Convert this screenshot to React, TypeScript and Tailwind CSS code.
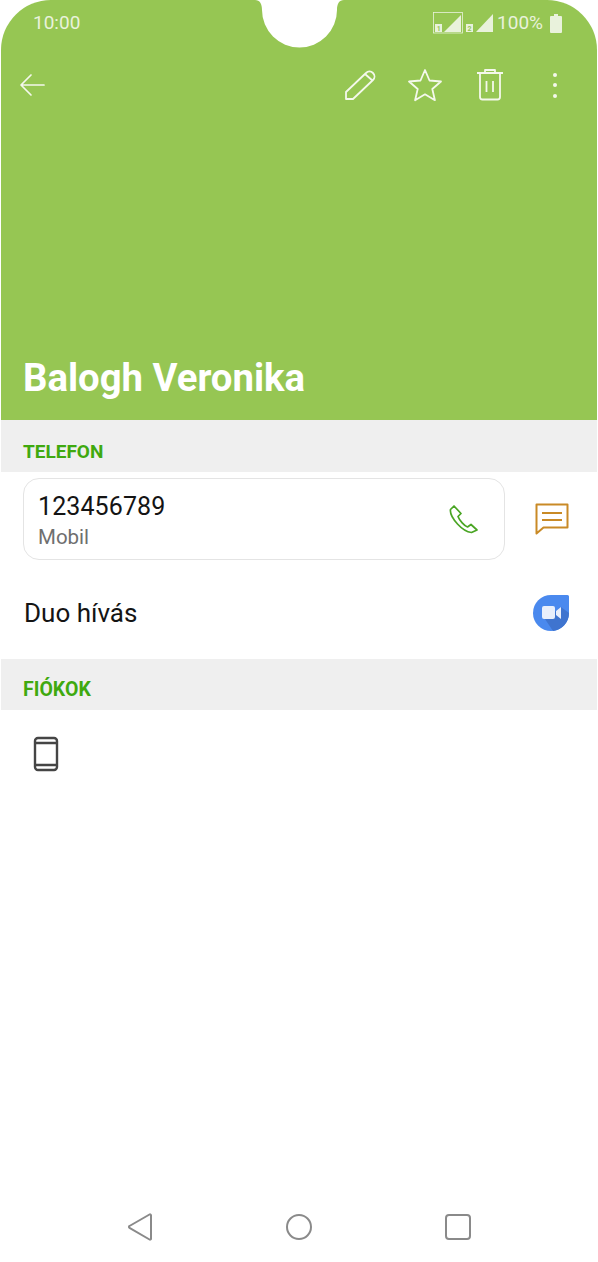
function Notch() {
  return (
    <svg className="absolute left-[249px] top-0" width="98" height="48" viewBox="0 0 98 48">
      <path d="M5 0c5 0 7 4 7 10a37.500 37.500 0 0 0 75 0c0-6 2-10 7-10z" fill="#fff" />
    </svg>
  );
}

function SignalIcons() {
  return (
    <svg width="62" height="24" viewBox="0 0 62 24" fill="#e9f2dc">
      <rect x="0.500" y="1.500" width="29" height="20.500" fill="none" stroke="#e9f2dc" strokeWidth="0.800" />
      <rect x="2" y="13" width="7" height="8" />
      <text x="3.800" y="20" fontSize="7" fill="#96c653" fontWeight="700">1</text>
      <path d="M11 21 28 4v17z" />
      <rect x="33" y="13" width="7" height="8" />
      <text x="34.500" y="20" fontSize="7" fill="#96c653" fontWeight="700">2</text>
      <path d="M43 21 60 3v18z" />
    </svg>
  );
}

function Battery() {
  return (
    <svg width="12" height="19" viewBox="0 0 12 19">
      <path d="M4 0h4v2h3a1 1 0 0 1 1 1v15a1 1 0 0 1-1 1H1a1 1 0 0 1-1-1V3a1 1 0 0 1 1-1h3z" fill="#e9f2dc" />
    </svg>
  );
}

export default function App() {
  return (
    <div className="relative w-[598px] h-[1262px] bg-white overflow-hidden font-['Roboto',sans-serif]">
      {/* Header */}
      <header className="relative mx-px h-[420px] bg-[#96c653] rounded-t-[50px] flex flex-col">
        <Notch />
        <div className="h-[46px] flex items-center pl-[32px] pr-[35px] text-[#e9f2dc] text-[19px]">
          <span>10:00</span>
          <div className="ml-auto flex items-center">
            <SignalIcons />
            <span className="ml-[2px] mr-[7px]">100%</span>
            <Battery />
          </div>
        </div>
        <div className="h-[80px] flex items-center pl-[18px] pr-[40px] -mt-[1px]">
          <svg width="28" height="24" viewBox="0 0 28 24" fill="none" stroke="#f4f8ec" strokeWidth="1.700" strokeLinecap="round" strokeLinejoin="round">
            <path d="M25 12H3M12 2 2 12l10 10" />
          </svg>
          <div className="ml-auto flex items-center">
            <svg width="34" height="34" viewBox="0 0 34 34" fill="none" stroke="#f4f8ec" strokeWidth="1.800" strokeLinejoin="round" className="mr-[31px]">
              <path d="M3 31v-7L23 5c2-2 5-2 7 0s2 5 0 7L10 31zM22 6l8 7" />
            </svg>
            <svg width="34" height="34" viewBox="0 0 34 34" fill="none" stroke="#f4f8ec" strokeWidth="1.800" strokeLinejoin="round" className="mr-[34px]">
              <path d="M17 2l4.500 10.500 11.500 1-8.700 7.500 2.600 11.200L17 26.300 7.100 32.200 9.700 21 1 13.500l11.500-1z" />
            </svg>
            <svg width="28" height="32" viewBox="0 0 28 32" fill="none" stroke="#f4f8ec" strokeWidth="1.800" strokeLinejoin="round" className="mr-[49px]">
              <path d="M1 4h26M9 4V1h10v3M4 4v24a2.500 2.500 0 0 0 2.500 2.500h15a2.500 2.500 0 0 0 2.500-2.500V4M10.500 12v11M17 12v11" />
            </svg>
            <div className="flex flex-col gap-[6.500px]">
              <span className="w-[4px] h-[4px] rounded-full bg-[#f4f8ec]" />
              <span className="w-[4px] h-[4px] rounded-full bg-[#f4f8ec]" />
              <span className="w-[4px] h-[4px] rounded-full bg-[#f4f8ec]" />
            </div>
          </div>
        </div>
        <h1 className="mt-auto pl-[22px] pb-[20px] text-[38.300px] leading-[44px] font-bold text-white">Balogh Veronika</h1>
      </header>

      {/* Telefon */}
      <div className="mx-px h-[52px] bg-[#efefef] flex items-end pb-[8px] pl-[22px] text-[19px] leading-[24px] font-bold text-[#3fa90f]">TELEFON</div>
      <div className="mt-[6px] ml-[23px] flex items-center">
        <div className="w-[482px] h-[82px] rounded-[16px] border border-[#e4e4e4] flex items-center pl-[14px] pr-[24px]">
          <div className="pt-[3px]">
            <div className="text-[25px] leading-[32px] text-[#141414] tracking-[0.100px]">123456789</div>
            <div className="text-[20.500px] leading-[26px] text-[#6f6f6f]  mt-[1px]">Mobil</div>
          </div>
          <svg className="ml-auto" width="32" height="32" viewBox="0 0 32 32" fill="none" stroke="#4aa524" strokeWidth="1.700" strokeLinejoin="round">
            <path d="M6 3 2.500 6.500c-.5 3 2 9 7 14.500s10 8 14 8.500l5.500-2.500-6-5.500-3.500 2.500c-3-1-8-6.500-9.500-10.500l3-3z" />
          </svg>
        </div>
        <svg className="ml-[30px]" width="34" height="32" viewBox="0 0 34 32" fill="none" stroke="#c98a26" strokeWidth="2">
          <path d="M1.500 1.500h31v23h-24l-7 6z" strokeLinejoin="round" />
          <path d="M7 10h20M7 17h20" />
        </svg>
      </div>

      {/* Duo */}
      <div className="h-[99px] ml-[24px] pr-[28px] pt-[7px] flex items-center justify-between">
        <span className="text-[26px] text-[#141414]">Duo hívás</span>
        <svg width="38" height="38" viewBox="0 0 38 38">
          <path d="M19 1h16.500A1.500 1.500 0 0 1 37 2.500V19a18 18 0 1 1-18-18z" fill="#4a89ee" />
          <path d="M13 25 24 17l5-4 8 6a18 18 0 0 1-16 18z" fill="#3f74cf" />
          <path d="M12 12h9a2 2 0 0 1 2 2v9a2 2 0 0 1-2 2h-9a2 2 0 0 1-2-2v-9a2 2 0 0 1 2-2zm12 5 5-4v12l-5-4z" fill="#e9effb" />
        </svg>
      </div>

      {/* Fiokok */}
      <div className="mx-px h-[51px] bg-[#efefef] flex items-end pb-[8px] pl-[22px] text-[19.500px] leading-[24px] font-bold text-[#3fa90f]">FIÓKOK</div>
      <div className="ml-[33px] mt-[26px]">
        <svg width="26" height="36" viewBox="0 0 26 36" fill="none" stroke="#454545" strokeWidth="2.400">
          <rect x="2" y="2" width="22" height="32" rx="3" />
          <path d="M2 7h22M2 29h22" />
        </svg>
      </div>

      {/* Nav bar */}
      <nav className="absolute bottom-[21px] left-[127px] flex items-center gap-[132px]">
        <svg width="26" height="28" viewBox="0 0 26 28" fill="none" stroke="#8a8a8a" strokeWidth="2" strokeLinejoin="round">
          <path d="M24 2.500a1 1 0 0 0-1.500-1L2.500 13a1 1 0 0 0 0 1.800l20 11.700a1 1 0 0 0 1.500-1z" />
        </svg>
        <svg width="28" height="28" viewBox="0 0 28 28" fill="none" stroke="#8a8a8a" strokeWidth="2">
          <circle cx="14" cy="14" r="12" />
        </svg>
        <svg width="28" height="28" viewBox="0 0 28 28" fill="none" stroke="#8a8a8a" strokeWidth="2" className="-ml-[1px]">
          <rect x="2" y="2" width="24" height="24" rx="3" />
        </svg>
      </nav>
    </div>
  );
}
